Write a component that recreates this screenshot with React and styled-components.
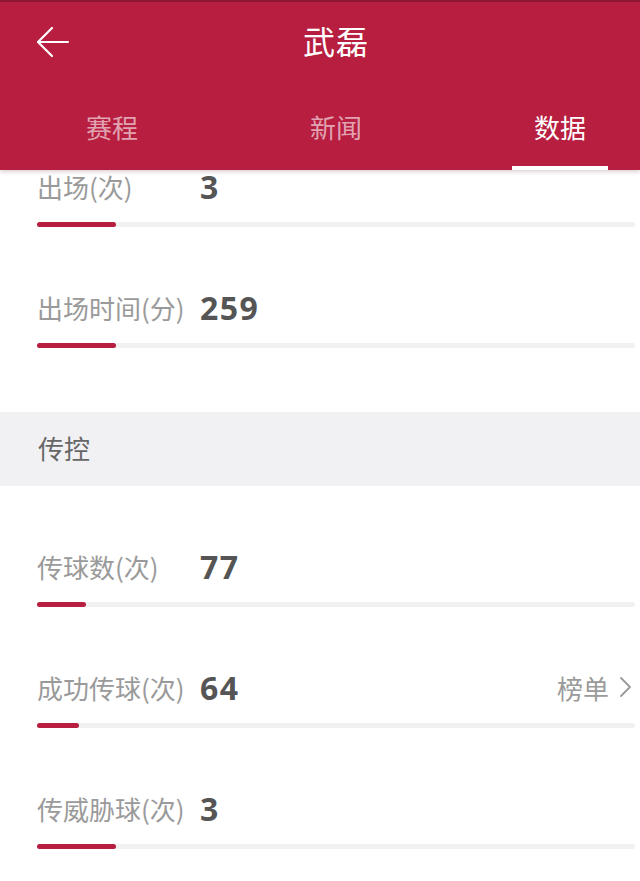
import React from 'react';
import styled, {createGlobalStyle} from "styled-components";

const GlobalStyle = createGlobalStyle`
    html, body {
        margin: 0;
        padding: 0;
        background: #fff;
    }
    body {
        font-family: "Noto Sans CJK SC", "Noto Sans", sans-serif;
    }
`;

const Page = styled.div`
    width: 640px;
    height: 881px;
    overflow: hidden;
    display: flex;
    flex-direction: column;
    background: #fff;
`;

const Header = styled.header`
    position: relative;
    z-index: 2;
    flex-shrink: 0;
    background: #b71e40;
    border-top: 2px solid #8e1632;
    box-shadow: 0 2px 4px rgba(80, 0, 20, 0.18);
`;

const TitleBar = styled.div`
    height: 80px;
    box-sizing: border-box;
    padding-bottom: 4px;
    display: grid;
    grid-template-columns: 120px 1fr 88px;
    align-items: center;
`;

const BackButton = styled.button`
    border: none;
    background: none;
    padding: 4px 0 0 36px;
    height: 100%;
    display: flex;
    align-items: center;
    cursor: pointer;
`;

const Title = styled.h1`
    margin: 0;
    text-align: center;
    color: #fff;
    font-size: 32px;
    font-weight: 400;
    line-height: 1;
    letter-spacing: 1px;
`;

const Tabs = styled.nav`
    height: 88px;
    display: flex;
    overflow: hidden;
`;

const Tab = styled.div`
    position: relative;
    flex: 0 0 224px;
    display: flex;
    align-items: center;
    justify-content: center;
    font-size: 26px;
    color: ${p => p.$active ? '#fff' : 'rgba(255, 255, 255, 0.6)'};

    &::after {
        content: '';
        display: ${p => p.$active ? 'block' : 'none'};
        position: absolute;
        bottom: 0;
        left: 50%;
        width: 96px;
        height: 4px;
        margin-left: -48px;
        background: #fff;
    }
`;

const Viewport = styled.main`
    flex: 1;
    overflow: hidden;
`;

// list is scrolled a bit, first row sits under the header
const Sheet = styled.div`
    margin-top: -64px;
`;

const Section = styled.section`
    padding-bottom: 64px;
`;

const SectionHead = styled.div`
    height: 74px;
    display: flex;
    align-items: center;
    padding: 0 0 3px 38px;
    box-sizing: border-box;
    background: #f1f1f3;
    color: #666;
    font-size: 26px;
`;

const Row = styled.div`
    padding: 60px 5px 0 37px;
`;

const RowTop = styled.div`
    height: 40px;
    display: flex;
    align-items: center;
`;

const Label = styled.span`
    width: 163px;
    flex-shrink: 0;
    color: #9a9a9a;
    font-size: 26px;
    white-space: nowrap;
`;

const Value = styled.span`
    font-family: "Open Sans", "Noto Sans", sans-serif;
    font-weight: 700;
    font-size: 32px;
    color: #555;
    letter-spacing: 1.5px;
`;

const RankLink = styled.a`
    margin-left: auto;
    margin-right: 3px;
    display: flex;
    align-items: center;
    gap: 10px;
    color: #9a9a9a;
    font-size: 26px;
`;

const Track = styled.div`
    margin-top: 16px;
    height: 5px;
    border-radius: 3px;
    background: #f1f1f1;
`;

const Fill = styled.div`
    height: 100%;
    border-radius: 3px;
    background: #b71e40;
`;

const BackArrow = () => (
    <svg width="34" height="32" viewBox="0 0 34 32" fill="none" stroke="#fff" strokeWidth="2.2" strokeLinecap="round" strokeLinejoin="round">
        <path d="M2 16 H32" />
        <path d="M16 2 L2 16 L16 30" />
    </svg>
);

const Chevron = () => (
    <svg width="13" height="22" viewBox="0 0 13 22" fill="none" stroke="#9a9a9a" strokeWidth="1.8" strokeLinecap="round" strokeLinejoin="round">
        <path d="M2 2 L11 11 L2 20" />
    </svg>
);

const sections = [
    {
        title: null,
        rows: [
            {label: '出场(次)', value: 3, pct: 13.2},
            {label: '出场时间(分)', value: 259, pct: 13.2},
        ],
    },
    {
        title: '传控',
        rows: [
            {label: '传球数(次)', value: 77, pct: 8.2},
            {label: '成功传球(次)', value: 64, pct: 7, rank: true},
            {label: '传威胁球(次)', value: 3, pct: 13.2},
        ],
    },
];

const StatRow = ({label, value, pct, rank}) => (
    <Row>
        <RowTop>
            <Label>{label}</Label>
            <Value>{value}</Value>
            {rank && <RankLink>榜单<Chevron /></RankLink>}
        </RowTop>
        <Track>
            <Fill style={{width: pct + '%'}} />
        </Track>
    </Row>
);

export default function App() {
    return (
        <Page>
            <GlobalStyle />
            <Header>
                <TitleBar>
                    <BackButton><BackArrow /></BackButton>
                    <Title>武磊</Title>
                    <span />
                </TitleBar>
                <Tabs>
                    <Tab>赛程</Tab>
                    <Tab>新闻</Tab>
                    <Tab $active>数据</Tab>
                </Tabs>
            </Header>
            <Viewport>
                <Sheet>
                    {sections.map((s, i) => (
                        <Section key={i}>
                            {s.title && <SectionHead>{s.title}</SectionHead>}
                            {s.rows.map(r => <StatRow key={r.label} {...r} />)}
                        </Section>
                    ))}
                </Sheet>
            </Viewport>
        </Page>
    );
}
